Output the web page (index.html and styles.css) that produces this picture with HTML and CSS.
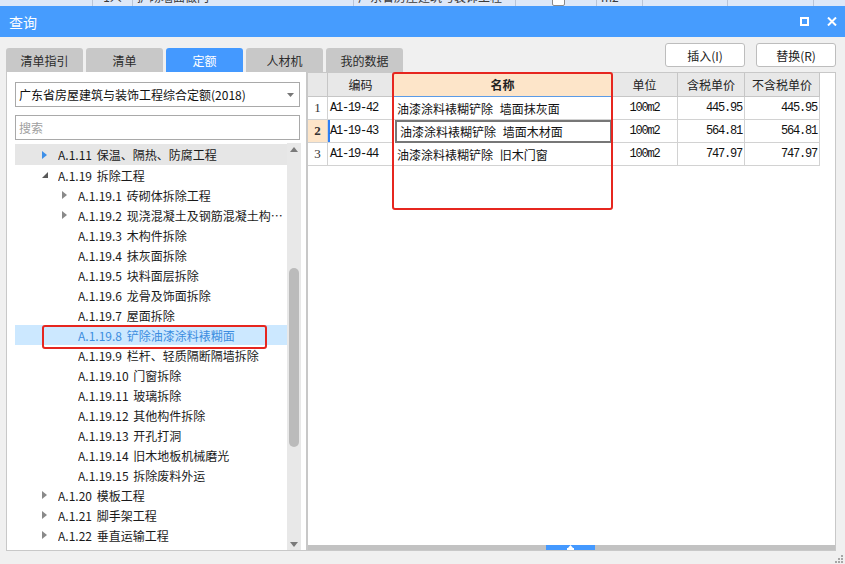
FILE: index.html
```html
<!DOCTYPE html>
<html lang="zh">
<head>
<meta charset="utf-8">
<title>查询</title>
<link rel="stylesheet" href="styles.css">
</head>
<body>
<div class="strip">
  <div class="sc c1"><span class="t">··························</span></div>
  <div class="sc c2"><span class="t">1人</span></div>
  <div class="sc c3"><span class="t">扩砌墙面做门</span></div>
  <div class="sc c4"><span class="t">广东省房屋建筑与装饰工程</span></div>
  <div class="sc c5"><span class="chk"></span></div>
  <div class="sc c6"><span class="t">m2</span></div>
  <div class="sc c7"><span class="t num">0000.00</span></div>
  <div class="sc c8"><span class="t num">000.00</span></div>
  <div class="sc c9"></div>
</div>
<div class="titlebar">
  <span class="title">查询</span>
  <span class="tb-icons">
    <svg width="9" height="9" viewBox="0 0 9 9"><rect x="1" y="1" width="7" height="7" fill="none" stroke="#fff" stroke-width="2"/></svg>
    <svg width="10" height="9" viewBox="0 0 10 9"><path d="M1 0.5 L9 8.5 M9 0.5 L1 8.5" stroke="#fff" stroke-width="2" fill="none"/></svg>
  </span>
</div>
<div class="dialog">
  <div class="toolbar">
    <div class="tabs">
      <div class="tab">清单指引</div>
      <div class="tab">清单</div>
      <div class="tab active">定额</div>
      <div class="tab">人材机</div>
      <div class="tab">我的数据</div>
    </div>
    <div class="buttons">
      <button class="btn">插入(I)</button>
      <button class="btn">替换(R)</button>
    </div>
  </div>
  <div class="main">
    <div class="left">
      <div class="select">
        <span>广东省房屋建筑与装饰工程综合定额(2018)</span>
        <svg width="7" height="4" viewBox="0 0 7 4"><path d="M0 0 H7 L3.5 4Z" fill="#777"/></svg>
      </div>
      <div class="search">搜索</div>
      <div class="tree">
        <div class="rows">
          <div class="row l1 hover"><span class="tw"><svg width="5" height="8" viewBox="0 0 5 8"><path d="M0 0 L5 4 L0 8Z" fill="#3d8fe8"/></svg></span><span class="lbl">A.1.11 保温、隔热、防腐工程</span></div>
          <div class="row l1"><span class="tw"><svg width="6" height="6" viewBox="0 0 6 6"><path d="M6 0 V6 H0Z" fill="#595959"/></svg></span><span class="lbl">A.1.19 拆除工程</span></div>
          <div class="row l2"><span class="tw"><svg width="5" height="8" viewBox="0 0 5 8"><path d="M0 0 L5 4 L0 8Z" fill="#8a8a8a"/></svg></span><span class="lbl">A.1.19.1 砖砌体拆除工程</span></div>
          <div class="row l2"><span class="tw"><svg width="5" height="8" viewBox="0 0 5 8"><path d="M0 0 L5 4 L0 8Z" fill="#8a8a8a"/></svg></span><span class="lbl">A.1.19.2 现浇混凝土及钢筋混凝土构件拆除</span></div>
          <div class="row l2"><span class="tw"></span><span class="lbl">A.1.19.3 木构件拆除</span></div>
          <div class="row l2"><span class="tw"></span><span class="lbl">A.1.19.4 抹灰面拆除</span></div>
          <div class="row l2"><span class="tw"></span><span class="lbl">A.1.19.5 块料面层拆除</span></div>
          <div class="row l2"><span class="tw"></span><span class="lbl">A.1.19.6 龙骨及饰面拆除</span></div>
          <div class="row l2"><span class="tw"></span><span class="lbl">A.1.19.7 屋面拆除</span></div>
          <div class="row l2 sel"><span class="tw"></span><span class="lbl">A.1.19.8 铲除油漆涂料裱糊面</span></div>
          <div class="row l2"><span class="tw"></span><span class="lbl">A.1.19.9 栏杆、轻质隔断隔墙拆除</span></div>
          <div class="row l2"><span class="tw"></span><span class="lbl">A.1.19.10 门窗拆除</span></div>
          <div class="row l2"><span class="tw"></span><span class="lbl">A.1.19.11 玻璃拆除</span></div>
          <div class="row l2"><span class="tw"></span><span class="lbl">A.1.19.12 其他构件拆除</span></div>
          <div class="row l2"><span class="tw"></span><span class="lbl">A.1.19.13 开孔打洞</span></div>
          <div class="row l2"><span class="tw"></span><span class="lbl">A.1.19.14 旧木地板机械磨光</span></div>
          <div class="row l2"><span class="tw"></span><span class="lbl">A.1.19.15 拆除废料外运</span></div>
          <div class="row l1"><span class="tw"><svg width="5" height="8" viewBox="0 0 5 8"><path d="M0 0 L5 4 L0 8Z" fill="#8a8a8a"/></svg></span><span class="lbl">A.1.20 模板工程</span></div>
          <div class="row l1"><span class="tw"><svg width="5" height="8" viewBox="0 0 5 8"><path d="M0 0 L5 4 L0 8Z" fill="#8a8a8a"/></svg></span><span class="lbl">A.1.21 脚手架工程</span></div>
          <div class="row l1"><span class="tw"><svg width="5" height="8" viewBox="0 0 5 8"><path d="M0 0 L5 4 L0 8Z" fill="#8a8a8a"/></svg></span><span class="lbl">A.1.22 垂直运输工程</span></div>
          <div class="row l1"><span class="tw"><svg width="5" height="8" viewBox="0 0 5 8"><path d="M0 0 L5 4 L0 8Z" fill="#8a8a8a"/></svg></span><span class="lbl">A.1.23 材料及小型构件二次水平运输</span></div>
        </div>
        <div class="vscroll">
          <span class="arr"><svg width="8" height="5" viewBox="0 0 8 5"><path d="M0 5 L4 0 L8 5Z" fill="#7a7a7a"/></svg></span>
          <span class="thumb"></span>
          <span class="fill"></span>
          <span class="arr"><svg width="8" height="5" viewBox="0 0 8 5"><path d="M0 0 L4 5 L8 0Z" fill="#7a7a7a"/></svg></span>
        </div>
      </div>
      <div class="anno anno-tree"></div>
    </div>
    <div class="right">
      <div class="grid">
        <div class="h"></div>
        <div class="h">编码</div>
        <div class="h name">名称</div>
        <div class="h">单位</div>
        <div class="h">含税单价</div>
        <div class="h">不含税单价</div>

        <div class="rn">1</div>
        <div class="code">A1-19-42</div>
        <div class="nm">油漆涂料裱糊铲除 墙面抹灰面</div>
        <div class="unit">100m2</div>
        <div class="price">445.95</div>
        <div class="price">445.95</div>

        <div class="rn cur">2</div>
        <div class="code curcode">A1-19-43</div>
        <div class="nm curcell">油漆涂料裱糊铲除 墙面木材面</div>
        <div class="unit">100m2</div>
        <div class="price">564.81</div>
        <div class="price">564.81</div>

        <div class="rn">3</div>
        <div class="code">A1-19-44</div>
        <div class="nm">油漆涂料裱糊铲除 旧木门窗</div>
        <div class="unit">100m2</div>
        <div class="price">747.97</div>
        <div class="price">747.97</div>
      </div>
      <div class="spacer"></div>
      <div class="hscroll"><span class="hthumb"><svg width="9" height="5" viewBox="0 0 9 5"><path d="M4.5 0 L7 3 H2Z M1 3 H8 V5 H1Z" fill="#fff"/></svg></span></div>
      <div class="anno anno-table"></div>
    </div>
  </div>
  <div class="footer">
    <svg class="grip" width="9" height="9" viewBox="0 0 9 9"><g fill="#a6a6a6"><rect x="7" y="1" width="2" height="2"/><rect x="4" y="4" width="2" height="2"/><rect x="7" y="4" width="2" height="2"/><rect x="1" y="7" width="2" height="2"/><rect x="4" y="7" width="2" height="2"/><rect x="7" y="7" width="2" height="2"/></g></svg>
  </div>
</div>
</body>
</html>
```
FILE: styles.css
```css
* { box-sizing: border-box; margin: 0; padding: 0; }
html, body { width: 845px; height: 564px; overflow: hidden; }
body {
  font-family: "Noto Sans CJK SC", "Microsoft YaHei", sans-serif;
  font-size: 12px;
  color: #1a1a1a;
  background: #f0f0f0;
}

/* underlying window strip */
.strip { height: 6px; background: #dde8f8; display: flex; overflow: hidden; }
.sc { height: 6px; border-right: 1px solid #b9c5d8; overflow: hidden; white-space: nowrap; font-size: 12px; line-height: 12px; color: #3a3a3a; padding-left: 4px; }
.sc .t { display: block; overflow: hidden; margin-top: -9px; }
.sc .num { font-family: "Liberation Mono", monospace; text-align: right; }
.c1 { width: 93px; padding-left: 0; }
.c2 { width: 40px; text-align: center; padding-left: 0; }
.c3 { width: 221px; }
.c4 { width: 162px; }
.c5 { width: 81px; display: flex; justify-content: center; }
.c6 { width: 46px; }
.c7 { width: 85px; text-align: right; padding-right: 6px; }
.c8 { width: 86px; text-align: right; padding-right: 6px; }
.c9 { flex: 1; border-right: 0; }
.chk { display: block; width: 13px; height: 13px; margin-top: -7px; background: #fff; border: 1px solid #8a8a8a; border-radius: 2px; }

/* title bar */
.titlebar {
  height: 31px;
  background: #469cfe;
  color: #fff;
  display: flex;
  align-items: center;
  justify-content: space-between;
  padding: 0 8px 0 9px;
  font-size: 14px;
}
.tb-icons { display: flex; align-items: center; gap: 18px; }

/* dialog */
.dialog { height: 527px; padding: 0 9px 0 6px; display: flex; flex-direction: column; }
.toolbar { height: 35px; display: flex; justify-content: space-between; }
.tabs { display: flex; gap: 3px; align-items: flex-end; }
.tab {
  width: 77px; height: 24px;
  background: #c8c8c8;
  border-radius: 3px 3px 0 0;
  display: flex; align-items: center; justify-content: center;
  color: #2b2b2b;
}
.tab.active { background: #4499ff; color: #fff; }
.buttons { display: flex; gap: 11px; padding-top: 6px; }
.btn {
  width: 80px; height: 24px;
  background: #fff;
  border: 1px solid #bdbdbd;
  border-radius: 3px;
  font: 12px "Noto Sans CJK SC", sans-serif;
  color: #222;
}

.main { display: flex; height: 479px; }

/* left panel */
.left {
  width: 301px;
  background: #fff;
  border-left: 1px solid #c8c8c8;
  border-right: 1px solid #c8c8c8;
  border-bottom: 1px solid #c8c8c8;
  padding: 10px 5px 0 8px;
  display: flex; flex-direction: column;
  position: relative;
}
.select {
  height: 25px; margin-right: 1px;
  border: 1px solid #a9a9a9;
  display: flex; align-items: center; justify-content: space-between;
  padding: 0 5px 0 3px;
  color: #111;
}
.search {
  height: 25px; margin-top: 8px; margin-right: 1px;
  border: 1px solid #a9a9a9;
  display: flex; align-items: center;
  padding: 0 3px;
  color: #a0a0a0;
}
.tree { flex: 1; margin-top: 3px; display: flex; min-height: 0; }
.rows { flex: 1; min-width: 0; overflow: hidden; padding-top: 1px; }
.row { height: 20px; display: flex; align-items: center; white-space: nowrap; color: #1a1a1a; word-spacing: 2px; }
.row.l1 { padding-left: 27px; }
.row.l2 { padding-left: 47px; }
.row.hover { background: #e6e6e6; height: 21px; }
.row.sel { background: #cce8ff; color: #3c8de0; }
.tw { width: 16px; flex: none; display: flex; align-items: center; }
.lbl { flex: 1; min-width: 0; overflow: hidden; text-overflow: ellipsis; padding-right: 3px; }
.vscroll { width: 14px; background: #e8e8e8; display: flex; flex-direction: column; align-items: center; }
.vscroll .arr { height: 12px; display: flex; align-items: center; justify-content: center; flex: none; }
.vscroll .thumb { width: 10px; height: 179px; margin-top: 113px; background: #bbbbbb; border-radius: 5px; flex: none; }
.vscroll .fill { flex: 1; }

/* right panel */
.right {
  width: 529px;
  background: #fff;
  border: 1px solid #c8c8c8;
  display: flex; flex-direction: column;
  position: relative;
}
.grid {
  display: grid;
  grid-template-columns: 20px 66px 218px 66px 67px 75px;
  grid-template-rows: 24px;
  grid-auto-rows: 23px;
  width: 512px;
}
.grid > div {
  border-right: 1px solid #d2d2d2;
  border-bottom: 1px solid #d2d2d2;
  display: flex; align-items: center;
  overflow: hidden; white-space: nowrap;
}
.grid > .h { background: #e8e8e8; justify-content: center; color: #222; border-color: #c6c6c6; }
.grid > .h.name { background: #fde5c9; font-weight: bold; border-bottom: 1px solid #5b9be6; }
.rn { justify-content: center; font-family: "Liberation Serif", serif; font-size: 13px; color: #333; }
.rn.cur { background: #fde5c9; font-weight: bold; }
.code { font-family: "Liberation Mono", monospace; font-size: 12px; letter-spacing: -1.2px; padding-left: 2px; color: #111; }
.code.curcode { box-shadow: inset 2px 0 0 #2f7ff5; }
.nm { padding-left: 3px; color: #111; word-spacing: 4px; }
.grid > .nm.curcell { border: 2px solid #777; margin-left: 1px; }
.unit { justify-content: center; font-family: "Liberation Mono", monospace; font-size: 12px; letter-spacing: -1.2px; color: #111; }
.price { justify-content: flex-end; padding-right: 2px; font-family: "Liberation Mono", monospace; font-size: 12px; letter-spacing: -1.2px; color: #111; }
.spacer { flex: 1; }
.hscroll { height: 5px; background: #c2c2c2; display: flex; }
.hthumb { width: 49px; margin-left: 238px; background: #4499ff; display: flex; align-items: center; justify-content: center; }

/* red annotations */
.anno { position: absolute; border: 2px solid #e6261f; border-radius: 3px; pointer-events: none; }
.anno-tree { left: 35px; top: 253px; width: 225px; height: 24px; }
.anno-table { left: 84px; top: -1px; width: 221px; height: 138px; }

.footer { flex: 1; display: flex; justify-content: flex-end; align-items: flex-end; margin-right: -7px; padding-bottom: 1px; }
```
